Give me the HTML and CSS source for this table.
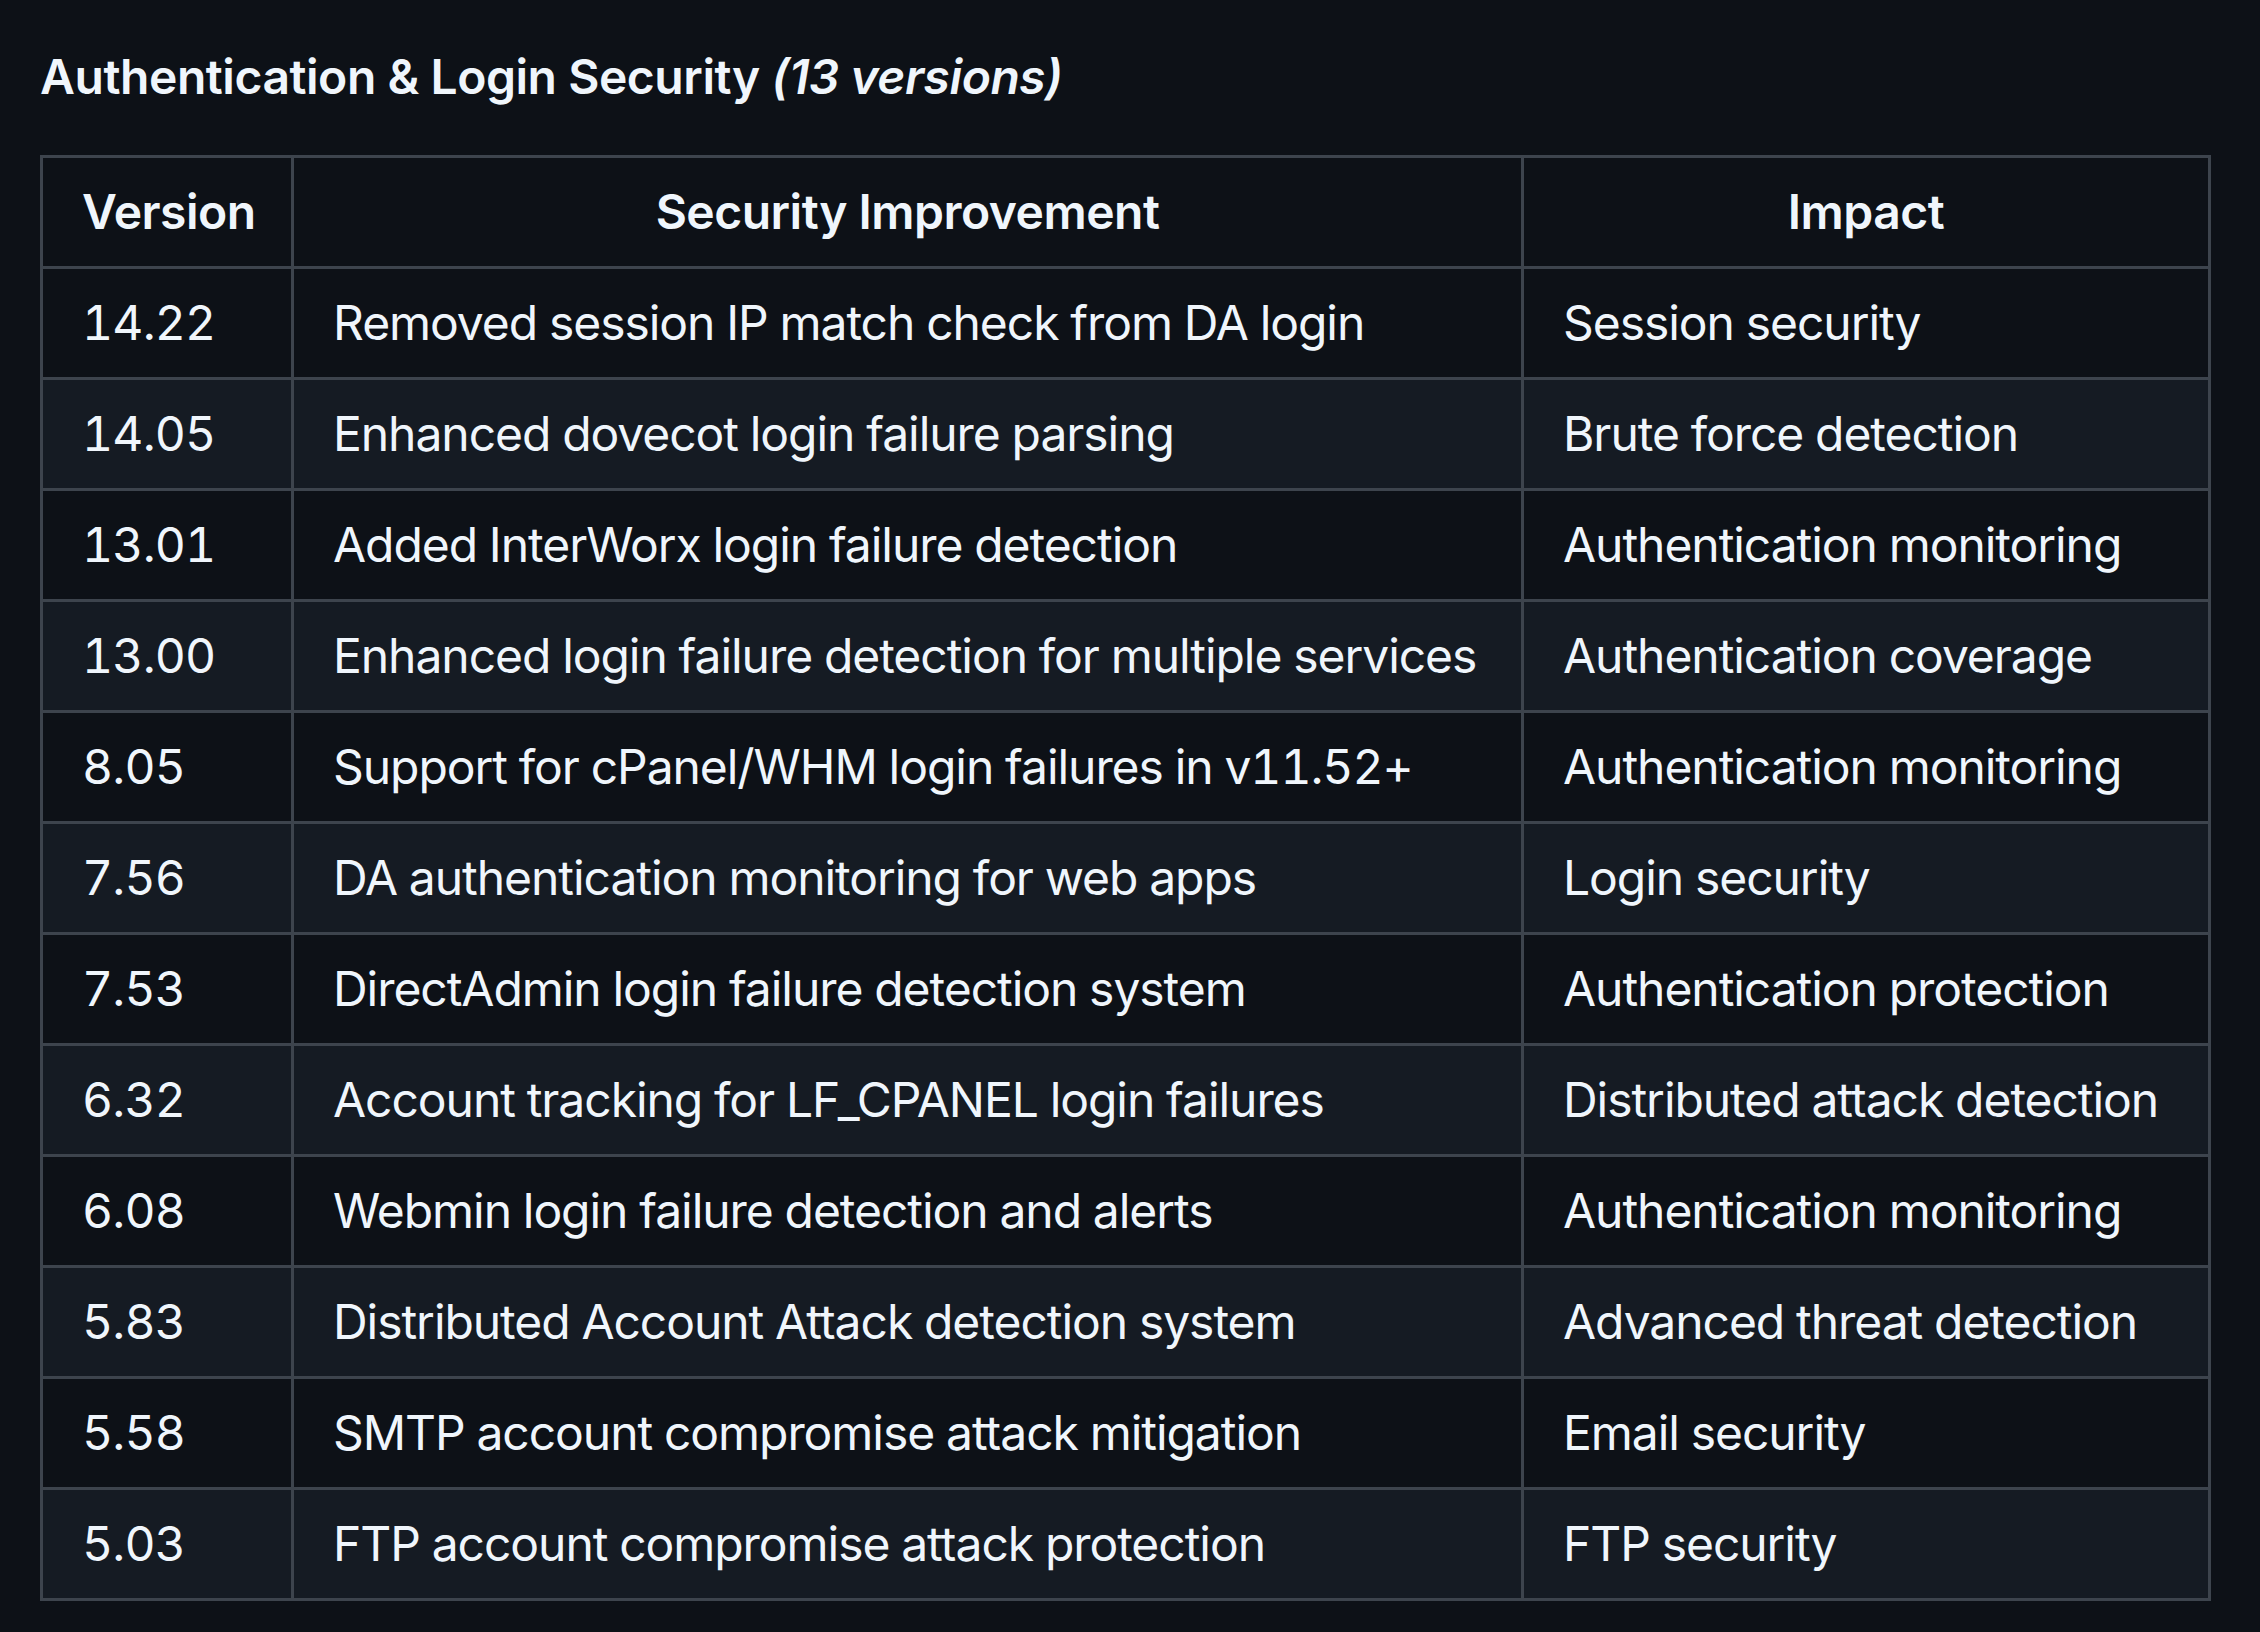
FILE: index.html
```html
<!DOCTYPE html>
<html lang="en">
<head>
<meta charset="utf-8">
<title>Authentication &amp; Login Security</title>
<link rel="stylesheet" href="styles.css">
</head>
<body>
<main class="markdown">
  <h4 class="section-title">Authentication &amp; Login Security <em>(13 versions)</em></h4>
  <table class="changes">
    <thead>
      <tr>
        <th class="col-version">Version</th>
        <th class="col-improvement">Security Improvement</th>
        <th class="col-impact">Impact</th>
      </tr>
    </thead>
    <tbody>
      <tr><td class="ver">14.22</td><td>Removed session IP match check from DA login</td><td>Session security</td></tr>
      <tr><td class="ver">14.05</td><td>Enhanced dovecot login failure parsing</td><td>Brute force detection</td></tr>
      <tr><td class="ver">13.01</td><td>Added InterWorx login failure detection</td><td>Authentication monitoring</td></tr>
      <tr><td class="ver">13.00</td><td>Enhanced login failure detection for multiple services</td><td>Authentication coverage</td></tr>
      <tr><td class="ver">8.05</td><td>Support for cPanel/WHM login failures in v11.52+</td><td>Authentication monitoring</td></tr>
      <tr><td class="ver">7.56</td><td>DA authentication monitoring for web apps</td><td>Login security</td></tr>
      <tr><td class="ver">7.53</td><td>DirectAdmin login failure detection system</td><td>Authentication protection</td></tr>
      <tr><td class="ver">6.32</td><td>Account tracking for LF_CPANEL login failures</td><td>Distributed attack detection</td></tr>
      <tr><td class="ver">6.08</td><td>Webmin login failure detection and alerts</td><td>Authentication monitoring</td></tr>
      <tr><td class="ver">5.83</td><td>Distributed Account Attack detection system</td><td>Advanced threat detection</td></tr>
      <tr><td class="ver">5.58</td><td>SMTP account compromise attack mitigation</td><td>Email security</td></tr>
      <tr><td class="ver">5.03</td><td>FTP account compromise attack protection</td><td>FTP security</td></tr>
    </tbody>
  </table>
</main>
</body>
</html>
```

FILE: styles.css
```css
html, body {
  margin: 0;
  padding: 0;
  background: #0d1117;
}

body {
  color: #f0f6fc;
  font-family: Inter, "Noto Sans", "Liberation Sans", sans-serif;
  font-size: 48px;
  line-height: 1.5;
}

.markdown {
  padding: 47px 49px 0 40px;
}

.section-title {
  margin: 0 0 48px 0;
  font-size: 48px;
  font-weight: 600;
  line-height: 60px;
  letter-spacing: -0.45px;
}

.section-title em {
  font-style: italic;
}

.changes {
  width: 2171px;
  table-layout: fixed;
  border-collapse: separate;
  border-spacing: 0;
  border-top: 3px solid #3d444d;
  border-left: 3px solid #3d444d;
}

.changes th,
.changes td {
  box-sizing: border-box;
  padding: 18px 39px;
  border-right: 3px solid #3d444d;
  border-bottom: 3px solid #3d444d;
  white-space: nowrap;
  overflow: visible;
}

.changes th {
  font-weight: 600;
  text-align: center;
  letter-spacing: -0.5px;
}

.changes td {
  text-align: left;
  letter-spacing: -1.05px;
  font-variant-numeric: tabular-nums;
}

.changes td.ver {
  letter-spacing: -0.8px;
}

.col-version { width: 251px; }
.col-improvement { width: 1230px; }
.col-impact { width: 687px; }

.changes tbody tr {
  background: #0d1117;
}

.changes tbody tr:nth-child(2n) {
  background: #151b23;
}
```
